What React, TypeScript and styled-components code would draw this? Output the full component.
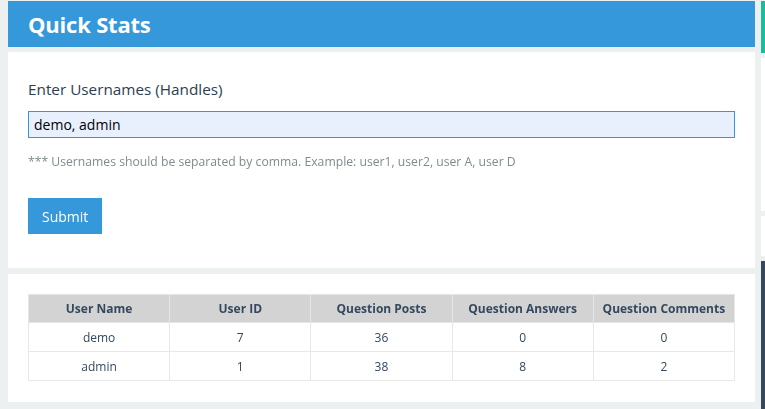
import React from "react";
import styled, { createGlobalStyle } from "styled-components";

const GlobalStyle = createGlobalStyle`
  html, body {
    margin: 0;
    padding: 0;
    background-color: #ecf0f1;
    overflow: hidden;
  }
  body {
    font-family: "Open Sans", "Noto Sans", sans-serif;
    color: #2c3e50;
  }
`;

const Page = styled.div`
  box-sizing: border-box;
  display: grid;
  grid-template-columns: 747px minmax(0, 1fr);
  column-gap: 6px;
  padding: 1px 0 0 8px;
  width: 100vw;
  height: 100vh;
  overflow: hidden;
`;

const MainColumn = styled.main`
  display: flex;
  flex-direction: column;
`;

const SideColumn = styled.aside`
  display: flex;
  flex-direction: column;
  gap: 5px;
  overflow: hidden;
`;

const SideBlock = styled.div<{ $color: string; $height: number }>`
  background-color: ${({ $color }) => $color};
  height: ${({ $height }) => $height}px;
  flex-shrink: 0;
`;

const Header = styled.header`
  height: 46px;
  background-color: #3498db;
  display: flex;
  align-items: center;
  padding: 0 20px;
  margin-bottom: 5px;
`;

const Title = styled.h1`
  margin: 0;
  color: #ffffff;
  font-size: 22px;
  font-weight: 700;
  letter-spacing: -0.2px;
`;

const Card = styled.section<{ $pad: string }>`
  background-color: #ffffff;
  padding: ${({ $pad }) => $pad};
  margin-bottom: 6px;
`;

const Label = styled.label`
  display: block;
  font-size: 15.3px;
  line-height: 22px;
  color: #2c3e50;
  margin-bottom: 11px;
`;

const Input = styled.input`
  display: block;
  box-sizing: border-box;
  width: 100%;
  height: 27px;
  border: 1px solid #3498db;
  background-color: #e8f0fe;
  padding: 0 5px;
  font-family: "Open Sans", "Noto Sans", sans-serif;
  font-size: 14px;
  color: #000000;
  outline: none;
`;

const Hint = styled.p`
  margin: 15px 0 0;
  font-size: 12.2px;
  line-height: 18px;
  color: #7f8c8d;
`;

const SubmitButton = styled.button`
  margin-top: 27px;
  height: 36px;
  padding: 0 14px;
  border: none;
  background-color: #3498db;
  color: #ffffff;
  font-family: "Open Sans", "Noto Sans", sans-serif;
  font-size: 14px;
  cursor: pointer;
`;

const Table = styled.table`
  width: 100%;
  border-collapse: collapse;
  table-layout: fixed;
  font-size: 12px;
`;

const HeadCell = styled.th`
  height: 27px;
  padding: 0;
  background-color: #d3d3d3;
  border: 1px solid #e6e6e6;
  font-weight: 700;
  color: #34495e;
  text-align: center;
`;

const Cell = styled.td`
  height: 28px;
  padding: 0;
  border: 1px solid #e8e8e8;
  color: #34495e;
  text-align: center;
`;

const stats = [
  { name: "demo", id: 7, posts: 36, answers: 0, comments: 0 },
  { name: "admin", id: 1, posts: 38, answers: 8, comments: 2 },
];

const columns = ["User Name", "User ID", "Question Posts", "Question Answers", "Question Comments"];

export default function App() {
  return (
    <>
      <GlobalStyle />
      <Page>
        <MainColumn>
          <Header>
            <Title>Quick Stats</Title>
          </Header>
          <Card $pad="26px 20px 34px">
            <Label htmlFor="handles">Enter Usernames (Handles)</Label>
            <Input id="handles" defaultValue="demo, admin" autoFocus />
            <Hint>*** Usernames should be separated by comma. Example: user1, user2, user A, user D</Hint>
            <SubmitButton>Submit</SubmitButton>
          </Card>
          <Card $pad="20px 20px 21px">
            <Table>
              <thead>
                <tr>
                  {columns.map((c) => (
                    <HeadCell key={c}>{c}</HeadCell>
                  ))}
                </tr>
              </thead>
              <tbody>
                {stats.map((s) => (
                  <tr key={s.name}>
                    <Cell>{s.name}</Cell>
                    <Cell>{s.id}</Cell>
                    <Cell>{s.posts}</Cell>
                    <Cell>{s.answers}</Cell>
                    <Cell>{s.comments}</Cell>
                  </tr>
                ))}
              </tbody>
            </Table>
          </Card>
        </MainColumn>
        <SideColumn>
          <SideBlock $color="#1abc9c" $height={52} />
          <SideBlock $color="#ffffff" $height={153} />
          <SideBlock $color="#ffffff" $height={40} />
          <SideBlock $color="#34495e" $height={200} />
        </SideColumn>
      </Page>
    </>
  );
}
